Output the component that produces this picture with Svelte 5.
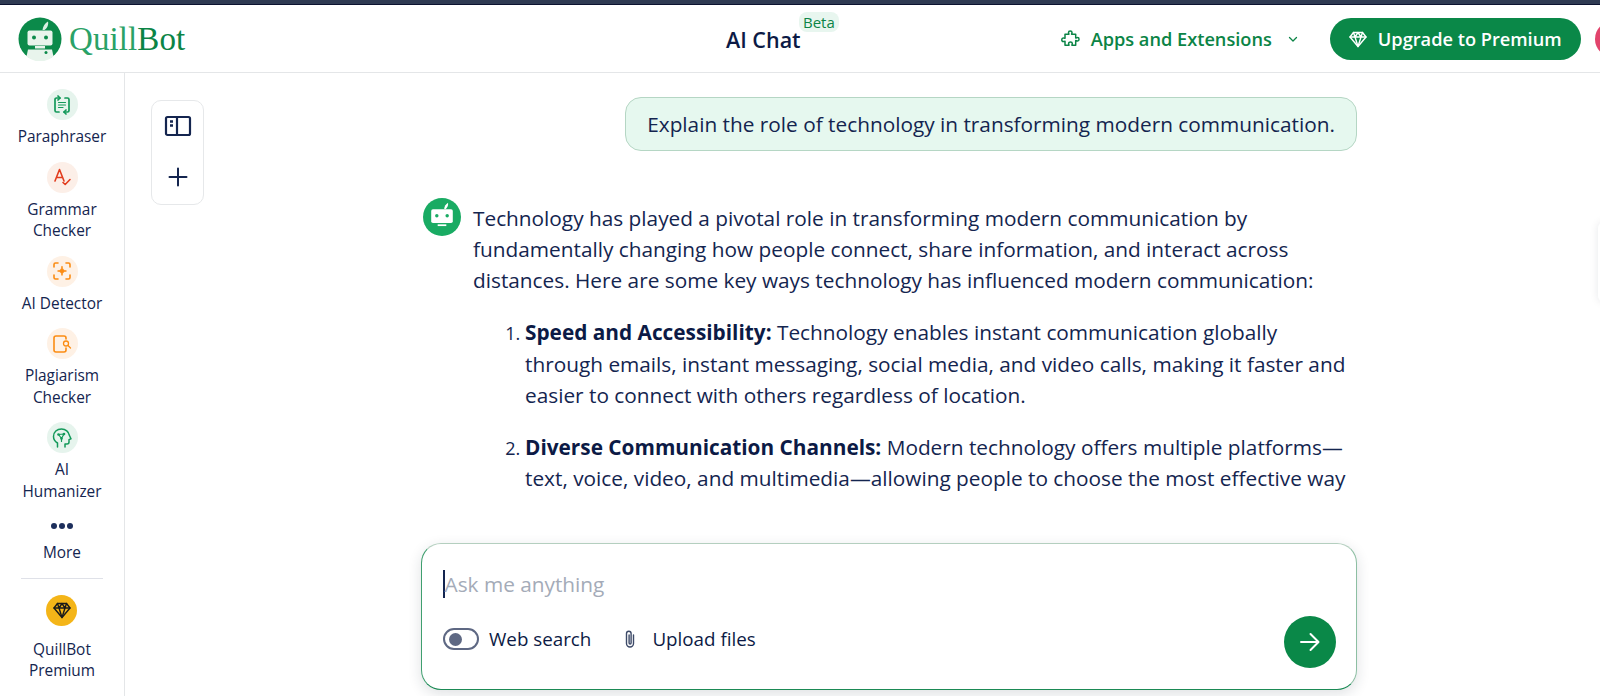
<script>
	const tools = [
		{ label: ['Paraphraser'], kind: 'para', tone: 'green' },
		{ label: ['Grammar', 'Checker'], kind: 'grammar', tone: 'red' },
		{ label: ['AI Detector'], kind: 'detector', tone: 'orange' },
		{ label: ['Plagiarism', 'Checker'], kind: 'plag', tone: 'orange' },
		{ label: ['AI', 'Humanizer'], kind: 'human', tone: 'green' }
	];
</script>

{#snippet diamond(size)}
	<svg width={size} height={size} viewBox="0 0 20 20" fill="none" stroke="currentColor" stroke-width="1.4" stroke-linejoin="round" stroke-linecap="round">
		<path d="M5.5 3.5h9l3.5 4.5-8 9.5-8-9.5z" />
		<path d="M2 8h16M7 8l3 9.5L13 8M5.5 3.5 7 8l3-4.5L13 8l1.5-4.5" />
	</svg>
{/snippet}

{#snippet bot(size, fill)}
	<svg width={size} height={size} viewBox="0 0 44 44">
		<circle cx="22" cy="22" r="22" {fill} />
		<path d="M24.5 12.5c.3-3 2-5.500 4.500-7 .6 3-1 6-3 7.500z" fill="#fff" />
		<rect x="9.500" y="13" width="25" height="16" rx="2" fill="#fff" />
		<circle cx="16" cy="20.500" r="2" fill={fill} />
		<circle cx="28" cy="20.500" r="2" fill={fill} />
		<rect x="17" y="30.500" width="10" height="2" fill="#fff" />
	</svg>
{/snippet}

<div class="page">
	<div class="strip"></div>
	<header>
		<div class="logo">
			<svg width="44" height="44" viewBox="0 0 44 44">
				<circle cx="22" cy="22" r="21.500" fill="#0b8a4a" />
				<path d="M24.500 13c.3-3.500 2.500-7 5.500-8.500 .8 3.500-1 7-3.500 8.500z" fill="#d9efe2" />
				<rect x="9.500" y="13.500" width="25" height="15" rx="2" fill="#e8f4ec" />
				<circle cx="16" cy="20.500" r="2" fill="#0b8a4a" />
				<circle cx="28" cy="20.500" r="2" fill="#0b8a4a" />
				<rect x="17" y="29" width="10" height="2.500" fill="#e8f4ec" />
				<path d="M10 32.500h24l1.500 7a21 21 0 0 1-27 0z" fill="#e8f4ec" />
				<circle cx="28" cy="35.500" r="1.500" fill="#0b8a4a" />
			</svg>
			<span class="wordmark"><span class="quill">Quill</span><span class="botword">Bot</span></span>
		</div>
		<div class="title">AI Chat<span class="beta">Beta</span></div>
		<div class="actions">
			<div class="apps">
				<svg width="20" height="20" viewBox="0 0 20 20" fill="none" stroke="currentColor" stroke-width="1.500" stroke-linejoin="round">
					<path d="M7.500 3.500c0-2 3.500-2 3.500 0 0 1-.4 1.200-.4 1.800h4.100v3.800c.7 0 1-.5 1.900-.5 1.900 0 1.900 3.400 0 3.400-.9 0-1.200-.5-1.900-.5v4.800h-3.800c0-.7.400-1 .4-1.800 0-1.900-3.700-1.900-3.700 0 0 .8.400 1.100.4 1.800H4v-4.100c-.7 0-1 .4-1.800.4-1.900 0-1.900-3.700 0-3.700.8 0 1.100.4 1.800.4V5.300h3.900c0-.6-.4-.8-.4-1.800z" />
				</svg>
				<span>Apps and Extensions</span>
				<svg class="chev" width="10" height="10" viewBox="0 0 10 10" fill="none" stroke="currentColor" stroke-width="1.300" stroke-linecap="round" stroke-linejoin="round"><path d="M1.500 3.500 5 7l3.500-3.500" /></svg>
			</div>
			<div class="upgrade">
				{@render diamond(20)}
				<span>Upgrade to Premium</span>
			</div>
			<div class="avatar"></div>
		</div>
	</header>

	<div class="body">
		<nav>
			{#each tools as tool}
				<div class="tool">
					<span class="disc {tool.tone}">
						{#if tool.kind === 'para'}
							<svg width="20" height="20" viewBox="0 0 20 20" fill="none" stroke="currentColor" stroke-width="1.700" stroke-linecap="round" stroke-linejoin="round">
								<path d="M8 3H4.500A1.500 1.500 0 0 0 3 4.500v11A1.500 1.500 0 0 0 4.500 17H7M12 17h3.500a1.500 1.500 0 0 0 1.500-1.500v-11A1.500 1.500 0 0 0 15.500 3H13" />
								<path d="M6 1 8 3 6 5M14 15l-2 2 2 2" />
								<path d="M6.500 7.500h7M6.500 10h7M6.500 12.500h4.500" stroke-width="1.200" />
							</svg>
						{:else if tool.kind === 'grammar'}
							<svg width="20" height="20" viewBox="0 0 20 20" fill="none" stroke="currentColor" stroke-width="1.600" stroke-linecap="round" stroke-linejoin="round">
								<path d="M3 14 7.500 2.500 12 14M4.500 10.500h6M11 15.500l2.200 2 4.800-5" />
							</svg>
						{:else if tool.kind === 'detector'}
							<svg width="20" height="20" viewBox="0 0 20 20" fill="none" stroke="currentColor" stroke-width="1.600" stroke-linecap="round" stroke-linejoin="round">
								<path d="M2 6V3.500A1.500 1.500 0 0 1 3.500 2H6M14 2h2.500A1.500 1.500 0 0 1 18 3.500V6M18 14v2.500a1.500 1.500 0 0 1-1.500 1.500H14M6 18H3.500A1.500 1.500 0 0 1 2 16.500V14" />
								<path d="M10 5.500c.5 3 1.500 4 4.500 4.500-3 .5-4 1.500-4.500 4.500-.5-3-1.500-4-4.500-4.500 3-.5 4-1.500 4.500-4.500z" fill="currentColor" stroke-width="0.800" />
							</svg>
						{:else if tool.kind === 'plag'}
							<svg width="20" height="20" viewBox="0 0 20 20" fill="none" stroke="currentColor" stroke-width="1.600" stroke-linecap="round" stroke-linejoin="round">
								<path d="M14 5V4a2 2 0 0 0-2-2H4a2 2 0 0 0-2 2v12a2 2 0 0 0 2 2h8a2 2 0 0 0 2-2v-2" />
								<circle cx="14" cy="9.500" r="2.500" stroke-width="1.300" />
								<path d="m16 11.500 2.500 2.500" stroke-width="1.300" />
							</svg>
						{:else}
							<svg width="22" height="22" viewBox="0 0 22 22" fill="none" stroke="currentColor" stroke-width="1.500" stroke-linecap="round" stroke-linejoin="round">
								<path d="M6.500 20v-4C4 14.500 2.500 12 2.500 9.500 2.500 5 6 2 10.500 2c4.200 0 7.300 2.800 7.700 6l1.800 3.800-2 .8V15a2 2 0 0 1-2 2h-2v3" />
								<path d="M7.500 7.500 13 7 10.500 11.500zM10.500 11.500v3" stroke-width="1.200" />
								<circle cx="7.500" cy="7.500" r="1.300" fill="currentColor" stroke="none" />
								<circle cx="13" cy="7" r="1.300" fill="currentColor" stroke="none" />
								<circle cx="10.500" cy="11.500" r="1.300" fill="currentColor" stroke="none" />
							</svg>
						{/if}
					</span>
					<span class="label">{#each tool.label as line}<span>{line}</span>{/each}</span>
				</div>
			{/each}
			<div class="more">
				<span class="dots"><i></i><i></i><i></i></span>
				<span class="label">More</span>
			</div>
			<hr />
			<div class="tool premium">
				<span class="disc gold">{@render diamond(20)}</span>
				<span class="label"><span>QuillBot</span><span>Premium</span></span>
			</div>
		</nav>

		<main>
			<div class="toolbar">
				<svg width="28" height="24" viewBox="0 0 28 24" fill="none" stroke="#14254f" stroke-width="2.200" stroke-linejoin="round">
					<rect x="2" y="3" width="24" height="18" rx="1.500" />
					<path d="M13 3v18" />
					<path d="M6 7.500h3M6 11.500h3" stroke-width="2.400" />
				</svg>
				<svg width="24" height="24" viewBox="0 0 24 24" fill="none" stroke="#14254f" stroke-width="2" stroke-linecap="round">
					<path d="M12 3.500v17M3.500 12h17" />
				</svg>
			</div>

			<div class="chat">
				<div class="scroll">
					<div class="bubble">Explain the role of technology in transforming modern communication.</div>
					<div class="answer">
						<span class="botmark">{@render bot(38, '#19ab63')}</span>
						<div class="copy">
							<p>Technology has played a pivotal role in transforming modern communication by fundamentally changing how people connect, share information, and interact across distances. Here are some key ways technology has influenced modern communication:</p>
							<ol>
								<li><b>Speed and Accessibility:</b> Technology enables instant communication globally through emails, instant messaging, social media, and video calls, making it faster and easier to connect with others regardless of location.</li>
								<li><b>Diverse Communication Channels:</b> Modern technology offers multiple platforms—text, voice, video, and multimedia—allowing people to choose the most effective way to communicate based on.</li>
							</ol>
						</div>
					</div>
				</div>

				<div class="composer">
					<div class="prompt"><span class="caret"></span>Ask me anything</div>
					<div class="controls">
						<span class="switch"><i></i></span>
						<span class="ctl">Web search</span>
						<svg class="clip" width="14" height="20" viewBox="0 0 14 20" fill="none" stroke="#3d4a68" stroke-width="1.400" stroke-linecap="round">
							<path d="M10.500 6v8.500a3.500 3.500 0 0 1-7 0V4.500a2.300 2.300 0 0 1 4.600 0V14a1 1 0 0 1-2 0V6" />
						</svg>
						<span class="ctl">Upload files</span>
						<span class="send">
							<svg width="24" height="24" viewBox="0 0 24 24" fill="none" stroke="#fff" stroke-width="2" stroke-linecap="round" stroke-linejoin="round">
								<path d="M3 12h17M12.500 4l8 8-8 8" />
							</svg>
						</span>
					</div>
				</div>
			</div>
			<div class="edge-tab"></div>
		</main>
	</div>
</div>

<style>
	:global(body) {
		margin: 0;
		background: #fff;
		overflow: hidden;
	}

	.page {
		width: 1600px;
		height: 696px;
		display: flex;
		flex-direction: column;
		overflow: hidden;
		font-family: 'Open Sans', sans-serif;
		color: #14254f;
	}

	.strip {
		height: 5px;
		flex: none;
		background: #2f3a52;
		border-bottom: 1px solid #0c1230;
		box-sizing: border-box;
	}

	header {
		height: 68px;
		flex: none;
		display: flex;
		align-items: center;
		border-bottom: 1px solid #e4e6e8;
		box-sizing: border-box;
		padding-left: 18px;
	}

	.logo {
		display: flex;
		align-items: center;
		gap: 7px;
		width: 708px;
		flex: none;
		margin-top: 1px;
	}

	.wordmark {
		font-family: 'Liberation Serif', serif;
		font-size: 33px;
		line-height: 1;
		letter-spacing: 0.1px;
	}

	.quill { color: #2aa267; }
	.botword { color: #0b8446; }

	.title {
		display: flex;
		flex: none;
		white-space: nowrap;
		position: relative;
		font-size: 21.500px;
		font-weight: 600;
		color: #0c1a45;
		margin-top: 1px;
	}

	.beta {
		position: absolute;
		left: 73px;
		top: -13px;
		padding: 0 4px;
		height: 20px;
		line-height: 20px;
		border-radius: 8px;
		background: #e8f6ef;
		color: #0b8446;
		font-size: 15px;
		font-weight: 400;
	}

	.actions {
		display: flex;
		align-items: center;
		margin-left: 260px;
		flex: none;
	}

	.apps {
		display: flex;
		align-items: center;
		color: #0b8446;
		font-size: 18.200px;
		font-weight: 600;
		gap: 10px;
		margin-right: 32px;
	}

	.chev { margin-left: 6px; }

	.upgrade {
		display: flex;
		align-items: center;
		gap: 10px;
		height: 42px;
		width: 251px;
		box-sizing: border-box;
		padding-left: 18px;
		border-radius: 21px;
		background: #0a8848;
		color: #fff;
		font-size: 18.200px;
		font-weight: 600;
	}

	.avatar {
		width: 36px;
		height: 36px;
		margin-left: 14px;
		flex: none;
		border-radius: 50%;
		background: #e2446c;
	}

	.body {
		flex: 1;
		display: flex;
		min-height: 0;
	}

	nav {
		width: 125px;
		flex: none;
		box-sizing: border-box;
		border-right: 1px solid #e4e6e8;
		padding-top: 16px;
		display: flex;
		flex-direction: column;
		align-items: center;
	}

	.tool {
		display: flex;
		flex-direction: column;
		align-items: center;
		margin-bottom: 14px;
	}

	.disc {
		width: 31px;
		height: 31px;
		border-radius: 50%;
		display: flex;
		align-items: center;
		justify-content: center;
	}

	.green { background: #e6f4ed; color: #13995a; }
	.red { background: #fcefe8; color: #e23d1f; }
	.orange { background: #fef1e5; color: #fb8c13; }
	.gold { background: #f4b518; color: #1a1a1a; }

	.label {
		display: flex;
		flex-direction: column;
		align-items: center;
		margin-top: 6px;
		font-size: 15.400px;
		line-height: 21.500px;
		color: #14254f;
		white-space: nowrap;
	}

	.more {
		display: flex;
		flex-direction: column;
		align-items: center;
		margin-top: 2px;
	}

	.dots {
		display: flex;
		gap: 2px;
		height: 16px;
		align-items: center;
	}

	.dots i {
		width: 6px;
		height: 6px;
		border-radius: 50%;
		background: #1d2f5c;
	}

	.more .label { margin-top: 8px; }

	hr {
		width: 82px;
		margin: 14px 0 16px;
		border: 0;
		border-top: 1px solid #dfe1e8;
	}

	.premium .label { margin-top: 13px; }

	main {
		flex: 1;
		min-width: 0;
		position: relative;
	}

	.toolbar {
		position: absolute;
		left: 26px;
		top: 27px;
		width: 53px;
		height: 105px;
		box-sizing: border-box;
		border: 1px solid #e6e8ea;
		border-radius: 10px;
		display: flex;
		flex-direction: column;
		align-items: center;
		padding-top: 13px;
		gap: 27px;
	}

	.edge-tab {
		position: absolute;
		right: -30px;
		top: 149px;
		width: 32px;
		height: 80px;
		background: #fff;
		border-radius: 6px;
		box-shadow: 0 0 8px rgba(20, 30, 50, 0.1);
	}

	.chat {
		width: 936px;
		margin-left: 296px;
		height: 100%;
		display: flex;
		flex-direction: column;
	}

	.scroll {
		height: 429px;
		flex: none;
		overflow: hidden;
		padding-top: 24px;
		box-sizing: border-box;
	}

	.bubble {
		width: fit-content;
		margin-left: auto;
		box-sizing: border-box;
		height: 54px;
		display: flex;
		align-items: center;
		padding: 0 21px;
		background: #e6f8ef;
		border: 1px solid #b5d6c4;
		border-radius: 16px;
		font-size: 20.800px;
		color: #14254f;
	}

	.answer {
		display: flex;
		margin-top: 48px;
		padding-left: 2px;
		font-size: 20.800px;
		line-height: 31.200px;
		color: #14254f;
	}

	.botmark {
		flex: none;
		width: 50px;
		display: block;
		margin-top: -1px;
	}

	.copy {
		flex: 1;
		min-width: 0;
		padding-top: 4px;
	}

	p { margin: 0; }

	ol {
		margin: 20.800px 0 0;
		padding: 0 0 0 52px;
	}

	li {
		margin-bottom: 20.800px;
	}

	li::marker {
		font-size: 18px;
	}

	li b {
		font-weight: 700;
		color: #0c1a45;
	}

	.composer {
		height: 147px;
		margin-top: 41px;
		flex: none;
		box-sizing: border-box;
		background: #fff;
		border: 1px solid #3f9f6f;
		border-top-color: #b4cfbf;
		border-right-color: #8dbfa3;
		border-bottom-color: #1b8a55;
		border-radius: 20px;
		box-shadow: 0 4px 14px rgba(30, 40, 60, 0.14);
		padding: 26px 21px 0;
		position: relative;
	}

	.prompt {
		display: flex;
		align-items: center;
		height: 28px;
		font-size: 20.800px;
		color: #a4abb8;
	}

	.caret {
		width: 1.500px;
		height: 28px;
		background: #14254f;
	}

	.controls {
		display: flex;
		align-items: center;
		margin-top: 29px;
		height: 24px;
	}

	.switch {
		width: 36px;
		height: 22px;
		box-sizing: border-box;
		border: 2.500px solid #5e6883;
		border-radius: 11px;
		display: flex;
		align-items: center;
		padding-left: 4px;
		margin-right: 10px;
	}

	.switch i {
		width: 13px;
		height: 13px;
		border-radius: 50%;
		background: #5e6883;
	}

	.ctl {
		font-size: 18.800px;
		font-weight: 500;
		color: #0c1a45;
	}

	.clip {
		margin-left: 32px;
		margin-right: 15px;
	}

	.send {
		position: absolute;
		right: 20px;
		bottom: 21px;
		width: 52px;
		height: 52px;
		border-radius: 50%;
		background: #0a8848;
		display: flex;
		align-items: center;
		justify-content: center;
	}
</style>
